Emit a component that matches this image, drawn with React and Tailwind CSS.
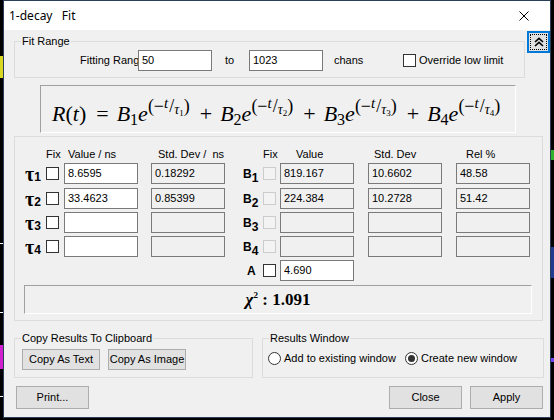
import React from "react";

function Box({ children, ro, w = "w-[74px]" }) {
  return (
    <div
      className={`${w} h-[21px] flex-none border border-[#7a7a7a] ${
        ro ? "bg-[#f0f0f0]" : "bg-white"
      } flex items-center pl-[3px] pb-[1px] text-[11px] text-black leading-none`}
    >
      {children}
    </div>
  );
}

function Check({ disabled }) {
  return (
    <div
      className={`w-[13px] h-[13px] flex-none border ${
        disabled ? "border-[#cccccc] bg-[#f3f3f3]" : "border-[#333333] bg-white"
      }`}
    />
  );
}

function Radio({ on }) {
  return (
    <div className="w-[13px] h-[13px] flex-none rounded-full border border-[#333333] bg-white flex items-center justify-center">
      {on && <div className="w-[7px] h-[7px] rounded-full bg-[#333333]" />}
    </div>
  );
}

function Btn({ children, w, h = "h-[23px]" }) {
  return (
    <div
      className={`${w} ${h} flex-none border border-[#adadad] bg-[#e1e1e1] flex items-center justify-center text-[11px] text-black`}
    >
      {children}
    </div>
  );
}

function TauLabel({ n }) {
  return (
    <div className="w-[31px] h-[21px] flex-none pl-[10px] flex items-center font-bold text-black">
      <span className="font-['Liberation_Serif',serif] text-[20px] leading-none">τ</span>
      <span className="text-[12px] leading-none relative top-[3px]">{n}</span>
    </div>
  );
}

function BLabel({ n }) {
  return (
    <div className="w-[38px] h-[21px] flex-none pl-[18px] flex items-center font-bold text-black text-[12px]">
      <span className="leading-none">B</span>
      <span className="leading-none relative top-[4px]">{n}</span>
    </div>
  );
}

function Term({ n }) {
  return (
    <>
      <i>B</i>
      <span className="text-[16px] align-[-4px]">{n}</span>
      <i>e</i>
      <span className="text-[18px] align-[9px]">
        (−<i className="text-[15px] align-[4px]">t</i>
        <span className="ml-[1px]">/</span>
        <i className="text-[14px] align-[-2px]">τ</i>
        <span className="text-[9px] align-[-4px]">{n}</span>)
      </span>
    </>
  );
}

function Group({ label, className, children }) {
  return (
    <div className={`relative flex-none border border-[#dcdcdc] ${className}`}>
      {label && (
        <span className="absolute -top-[8px] left-[6px] px-[1px] bg-[#f0f0f0] text-[11px] leading-[14px] text-black">
          {label}
        </span>
      )}
      {children}
    </div>
  );
}

function ParamRow({ tau, b, vals }) {
  return (
    <div className="flex items-center h-[21px]">
      <TauLabel n={tau} />
      <Check />
      <div className="ml-[5px]">
        <Box>{vals[0]}</Box>
      </div>
      <div className="ml-[13px]">
        <Box ro>{vals[1]}</Box>
      </div>
      <BLabel n={b} />
      <Check disabled />
      <div className="ml-[4px]">
        <Box ro>{vals[2]}</Box>
      </div>
      <div className="ml-[14px]">
        <Box ro>{vals[3]}</Box>
      </div>
      <div className="ml-[14px]">
        <Box ro>{vals[4]}</Box>
      </div>
    </div>
  );
}

export default function App() {
  return (
    <div className="w-[554px] h-[420px] bg-black flex overflow-hidden font-['Liberation_Sans',Arial,sans-serif]">
      {/* left strip of background app */}
      <div className="w-[3px] flex-none flex flex-col">
        <div className="h-[56px]" />
        <div className="h-[22px] bg-[#d8d820]" />
        <div className="h-[165px]" />
        <div className="h-[1px] bg-white" />
        <div className="h-[68px]" />
        <div className="h-[1px] bg-white" />
        <div className="h-[32px]" />
        <div className="h-[24px] bg-[#d020d0]" />
        <div className="h-[27px]" />
        <div className="h-[1px] bg-white" />
      </div>

      {/* window */}
      <div className="w-[548px] h-[418px] flex-none border border-[#2a3f57] bg-[#f0f0f0] flex flex-col">
        {/* title bar */}
        <div className="h-[29px] flex-none bg-white flex items-center justify-between pl-[5px] pr-[21px]">
          <span className="font-['Noto_Sans',sans-serif] text-[12px] text-black whitespace-pre leading-none">
            1-decay   Fit
          </span>
          <svg width="10" height="10" viewBox="0 0 10 10">
            <path d="M0.5 0.5 L9.5 9.5 M9.5 0.5 L0.5 9.5" stroke="#000" strokeWidth="1" fill="none" />
          </svg>
        </div>

        {/* body */}
        <div className="flex flex-col flex-1">
          {/* fit range row */}
          <div className="flex items-start">
            <Group label="Fit Range" className="ml-[10px] mt-[11px] w-[511px] h-[37px]">
              <div className="flex items-center pt-[8px] text-[11px] text-black">
                <div className="ml-[65px] w-[58px] overflow-hidden whitespace-nowrap">Fitting Range</div>
                <Box>50</Box>
                <div className="ml-[13px] w-[24px]">to</div>
                <Box>1023</Box>
                <div className="ml-[11px] w-[69px]">chans</div>
                <Check />
                <div className="ml-[3px]">Override low limit</div>
              </div>
            </Group>
            <div className="ml-[2px] mt-[1px] w-[23px] h-[22px] flex-none border-2 border-[#0078d7] bg-[#e1e1e1] p-[1px]">
              <div className="w-full h-full border border-dotted border-black flex items-center justify-center">
                <svg width="10" height="10" viewBox="0 0 10 10">
                  <path d="M1 5 L5 1.3 L9 5 M1 9 L5 5.3 L9 9" stroke="#000" strokeWidth="1.6" fill="none" />
                </svg>
              </div>
            </div>
          </div>

          {/* formula */}
          <div className="ml-[36px] mt-[7px] w-[476px] h-[48px] flex-none border border-t-[#a0a0a0] border-l-[#a0a0a0] border-r-white border-b-white flex items-center pl-[11px] pt-[5px]">
            <div className="font-['Liberation_Serif',serif] text-[22px] text-black whitespace-nowrap leading-none">
              <i>R</i>(<i>t</i>)<span className="ml-[10px] mr-[8px]">=</span>
              <Term n="1" />
              <span className="ml-[10px] mr-[8px]">+</span>
              <Term n="2" />
              <span className="ml-[10px] mr-[8px]">+</span>
              <Term n="3" />
              <span className="ml-[10px] mr-[8px]">+</span>
              <Term n="4" />
            </div>
          </div>

          {/* params group */}
          <Group className="ml-[10px] mt-[3px] w-[529px] h-[185px]">
            <div className="flex flex-col">
              <div className="mt-[11px] h-[13px] flex items-center text-[11px] text-black leading-none whitespace-pre">
                <div className="w-[31px] flex-none" />
                <div className="w-[18px] flex-none">Fix</div>
                <div className="w-[87px] flex-none pl-[4px]">Value / ns</div>
                <div className="w-[74px] flex-none pl-[7px]">Std. Dev /  ns</div>
                <div className="w-[38px] flex-none" />
                <div className="w-[17px] flex-none">Fix</div>
                <div className="w-[88px] flex-none pl-[16px]">Value</div>
                <div className="w-[88px] flex-none pl-[6px]">Std. Dev</div>
                <div className="pl-[10px]">Rel %</div>
              </div>
              <div className="mt-[2px] flex flex-col gap-[3px]">
                <ParamRow tau="1" b="1" vals={["8.6595", "0.18292", "819.167", "10.6602", "48.58"]} />
                <div className="mt-[1px]">
                  <ParamRow tau="2" b="2" vals={["33.4623", "0.85399", "224.384", "10.2728", "51.42"]} />
                </div>
                <ParamRow tau="3" b="3" vals={["", "", "", "", ""]} />
                <ParamRow tau="4" b="4" vals={["", "", "", "", ""]} />
                <div className="flex items-center h-[21px]">
                  <div className="w-[232px] flex-none" />
                  <div className="w-[16px] flex-none font-bold text-[12px] leading-none text-black">A</div>
                  <Check />
                  <div className="ml-[4px]">
                    <Box>4.690</Box>
                  </div>
                </div>
              </div>
              <div className="ml-[9px] mt-[4px] w-[508px] h-[29px] border border-t-[#a0a0a0] border-l-[#a0a0a0] border-r-white border-b-white flex items-center justify-center">
                <span className="font-['Liberation_Serif',serif] font-bold text-[17px] text-black leading-none">
                  <i>χ</i>
                  <span className="text-[9px] align-[7px]">2</span> : 1.091
                </span>
              </div>
            </div>
          </Group>

          {/* bottom groups */}
          <div className="flex mt-[17px]">
            <Group label="Copy Results To Clipboard" className="ml-[10px] w-[239px] h-[40px]">
              <div className="flex pt-[10px] pl-[7px] gap-[8px]">
                <Btn w="w-[78px]" h="h-[21px]">Copy As Text</Btn>
                <Btn w="w-[78px]" h="h-[21px]">Copy As Image</Btn>
              </div>
            </Group>
            <Group label="Results Window" className="ml-[9px] w-[282px] h-[40px]">
              <div className="flex items-center pt-[13px] pl-[5px] text-[11px] text-black leading-none">
                <div className="w-[137px] flex items-center">
                  <Radio />
                  <span className="ml-[3px]">Add to existing window</span>
                </div>
                <Radio on />
                <span className="ml-[3px]">Create new window</span>
              </div>
            </Group>
          </div>

          {/* bottom buttons */}
          <div className="flex mt-[8px]">
            <div className="ml-[12px]">
              <Btn w="w-[73px]">Print...</Btn>
            </div>
            <div className="flex-1" />
            <Btn w="w-[73px]">Close</Btn>
            <div className="ml-[8px] mr-[7px]">
              <Btn w="w-[73px]">Apply</Btn>
            </div>
          </div>
        </div>
      </div>

      {/* right strip */}
      <div className="w-[3px] flex-none flex flex-col">
        <div className="h-[150px]" />
        <div className="h-[10px] bg-[#30b030]" />
        <div className="h-[87px]" />
        <div className="h-[31px] bg-[#203c90]" />
        <div className="h-[80px]" />
        <div className="h-[4px] bg-[#7040ff]" />
      </div>
    </div>
  );
}
